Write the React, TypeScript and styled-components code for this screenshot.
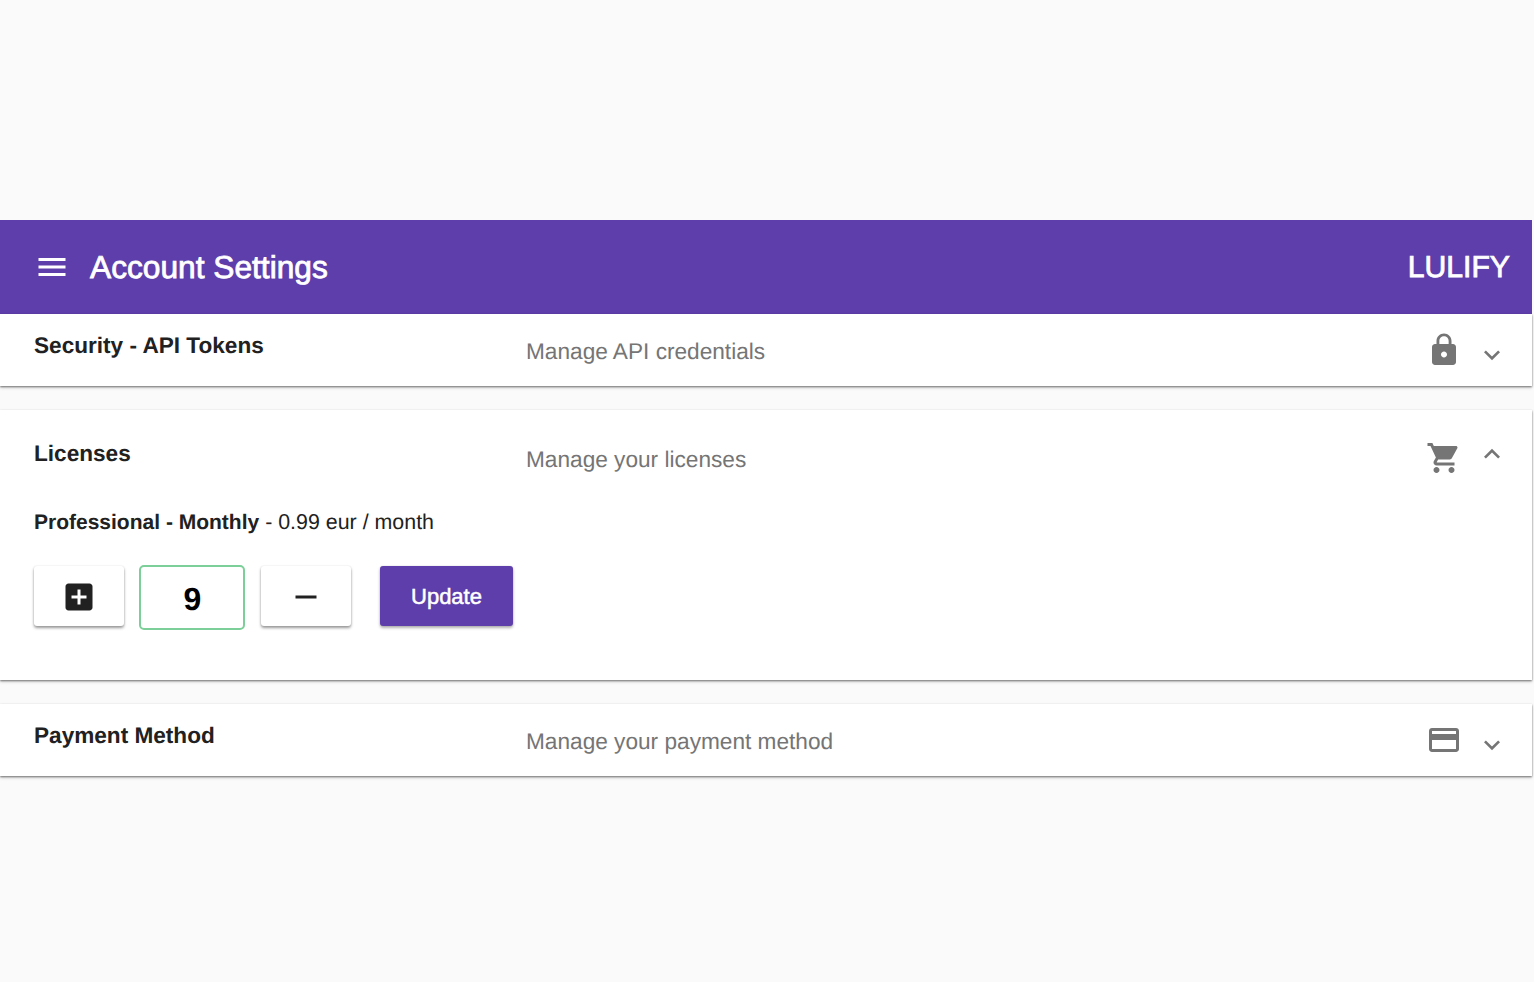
import React from "react";
import styled, { createGlobalStyle } from "styled-components";

const Global = createGlobalStyle`
  html, body {
    margin: 0;
    padding: 0;
    background: #fafafa;
    font-family: "Liberation Sans", Arial, sans-serif;
    text-rendering: geometricPrecision;
  }
`;

const Page = styled.div`
  width: 1532px;
  min-height: 982px;
  padding-top: 220px;
  box-sizing: border-box;
`;

const AppBar = styled.header`
  height: 94px;
  background: #5e3eab;
  color: #fff;
  display: flex;
  align-items: center;
  padding: 0 22px 0 34px;
`;

const AppTitle = styled.h1`
  margin: 1px 0 0 20px;
  flex: 1;
  font-size: 31.7px;
  font-weight: 400;
  -webkit-text-stroke: 0.8px #fff;
`;

const Brand = styled.div`
  margin-top: 1px;
  font-size: 30.2px;
  font-weight: 400;
  -webkit-text-stroke: 0.8px #fff;
`;

const Icon = styled.svg<{ $size: number; $color: string }>`
  display: block;
  flex: none;
  width: ${(p) => p.$size}px;
  height: ${(p) => p.$size}px;
  fill: ${(p) => p.$color};
`;

const Panel = styled.section<{ $gap?: boolean }>`
  background: #fff;
  margin-top: ${(p) => (p.$gap ? "24px" : "0")};
  box-shadow: 0 1px 2px rgba(0, 0, 0, 0.55), 0 3px 3px rgba(0, 0, 0, 0.06);
`;

const Summary = styled.div<{ $open?: boolean }>`
  display: flex;
  align-items: flex-start;
  height: 72px;
  padding: ${(p) => (p.$open ? "12px" : "0")} 24px 0 34px;
  box-sizing: border-box;
`;

const Title = styled.div`
  width: 492px;
  margin-top: 19px;
  font-size: 22.6px;
  line-height: 26px;
  font-weight: 700;
  color: #212121;
`;

const Subtitle = styled.div`
  flex: 1;
  margin-top: 23px;
  font-size: 22.65px;
  line-height: 28px;
  color: #757575;
`;

const StatusIcon = styled.div`
  margin-top: 17.5px;
`;

const Chevron = styled.div<{ $open?: boolean }>`
  margin: ${(p) => (p.$open ? "15.5px" : "25px")} 0 0 14px;
`;

const Details = styled.div`
  padding: 0 0 50px 34px;
  color: #212121;
`;

const Plan = styled.div`
  font-size: 21.4px;
  line-height: 26px;
  margin-top: 27px;
`;

const PlanName = styled.span`
  font-size: 21px;
  font-weight: 700;
`;

const Controls = styled.div`
  display: flex;
  align-items: flex-start;
  margin-top: 30px;
`;

const StepButton = styled.button`
  width: 90px;
  height: 60px;
  border: 0;
  padding: 2px 0 0;
  border-radius: 3px;
  background: #fff;
  display: flex;
  align-items: center;
  justify-content: center;
  box-shadow: 0 2px 3px rgba(0, 0, 0, 0.4), 0 0 2px rgba(0, 0, 0, 0.1);
`;

const Quantity = styled.div`
  width: 106px;
  height: 65px;
  margin: -1px 16px 0 15px;
  box-sizing: border-box;
  border: 2px solid #7ccf98;
  border-radius: 5px;
  display: flex;
  align-items: center;
  justify-content: center;
  padding: 3px 0 0 1px;
  font-size: 32px;
  font-weight: 700;
  color: #000;
`;

const UpdateButton = styled.button`
  width: 133px;
  height: 60px;
  margin-left: 29px;
  border: 0;
  padding: 1px 0 0;
  border-radius: 3px;
  background: #5e3eab;
  color: #fff;
  font-family: inherit;
  font-size: 22px;
  -webkit-text-stroke: 0.5px #fff;
  box-shadow: 0 2px 3px rgba(0, 0, 0, 0.3), 0 0 2px rgba(0, 0, 0, 0.12);
`;

const paths = {
  menu: "M3 18h18v-2H3v2zm0-5h18v-2H3v2zm0-7v2h18V6H3z",
  lock: "M18 8h-1V6c0-2.76-2.24-5-5-5S7 3.24 7 6v2H6c-1.1 0-2 .9-2 2v10c0 1.1.9 2 2 2h12c1.1 0 2-.9 2-2V10c0-1.1-.9-2-2-2zm-6 9c-1.1 0-2-.9-2-2s.9-2 2-2 2 .9 2 2-.9 2-2 2zm3.1-9H8.9V6c0-1.71 1.39-3.1 3.1-3.1 1.71 0 3.1 1.39 3.1 3.1v2z",
  cart: "M7 18c-1.1 0-1.99.9-1.99 2S5.9 22 7 22s2-.9 2-2-.9-2-2-2zM1 2v2h2l3.6 7.59-1.35 2.45c-.16.28-.25.61-.25.96 0 1.1.9 2 2 2h12v-2H7.42c-.14 0-.25-.11-.25-.25l.03-.12.9-1.63h7.45c.75 0 1.41-.41 1.75-1.03l3.58-6.49c.08-.14.12-.31.12-.48 0-.55-.45-1-1-1H5.21l-.94-2H1zm16 16c-1.1 0-1.99.9-1.99 2s.89 2 1.99 2 2-.9 2-2-.9-2-2-2z",
  card: "M20 4H4c-1.11 0-1.99.89-1.99 2L2 18c0 1.11.89 2 2 2h16c1.11 0 2-.89 2-2V6c0-1.11-.89-2-2-2zm0 14H4v-6h16v6zm0-10H4V6h16v2z",
  more: "M16.59 8.59L12 13.17 7.41 8.59 6 10l6 6 6-6z",
  less: "M12 8l-6 6 1.41 1.41L12 10.83l4.59 4.58L18 14z",
  add: "M19 3H5c-1.11 0-2 .9-2 2v14c0 1.1.89 2 2 2h14c1.1 0 2-.9 2-2V5c0-1.1-.9-2-2-2zm-2 10h-4v4h-2v-4H7v-2h4V7h2v4h4v2z",
  remove: "M19 13H5v-2h14v2z",
};

type GlyphProps = {
  name: keyof typeof paths;
  size?: number;
  color?: string;
};

const Glyph = ({ name, size = 36, color = "#757575" }: GlyphProps) => (
  <Icon viewBox="0 0 24 24" $size={size} $color={color}>
    <path d={paths[name]} />
  </Icon>
);

type RowProps = {
  title: string;
  subtitle: string;
  icon: keyof typeof paths;
  open?: boolean;
};

const Row = ({ title, subtitle, icon, open }: RowProps) => (
  <Summary $open={open}>
    <Title>{title}</Title>
    <Subtitle>{subtitle}</Subtitle>
    <StatusIcon>
      <Glyph name={icon} />
    </StatusIcon>
    <Chevron $open={open}>
      <Glyph name={open ? "less" : "more"} size={32} />
    </Chevron>
  </Summary>
);

export default function App() {
  return (
    <Page>
      <Global />
      <AppBar>
        <Glyph name="menu" color="#fff" />
        <AppTitle>Account Settings</AppTitle>
        <Brand>LULIFY</Brand>
      </AppBar>
      <Panel>
        <Row title="Security - API Tokens" subtitle="Manage API credentials" icon="lock" />
      </Panel>
      <Panel $gap>
        <Row title="Licenses" subtitle="Manage your licenses" icon="cart" open />
        <Details>
          <Plan>
            <PlanName>Professional - Monthly</PlanName> - 0.99 eur / month
          </Plan>
          <Controls>
            <StepButton>
              <Glyph name="add" color="#212121" />
            </StepButton>
            <Quantity>9</Quantity>
            <StepButton>
              <Glyph name="remove" color="#212121" />
            </StepButton>
            <UpdateButton>Update</UpdateButton>
          </Controls>
        </Details>
      </Panel>
      <Panel $gap>
        <Row title="Payment Method" subtitle="Manage your payment method" icon="card" />
      </Panel>
    </Page>
  );
}
